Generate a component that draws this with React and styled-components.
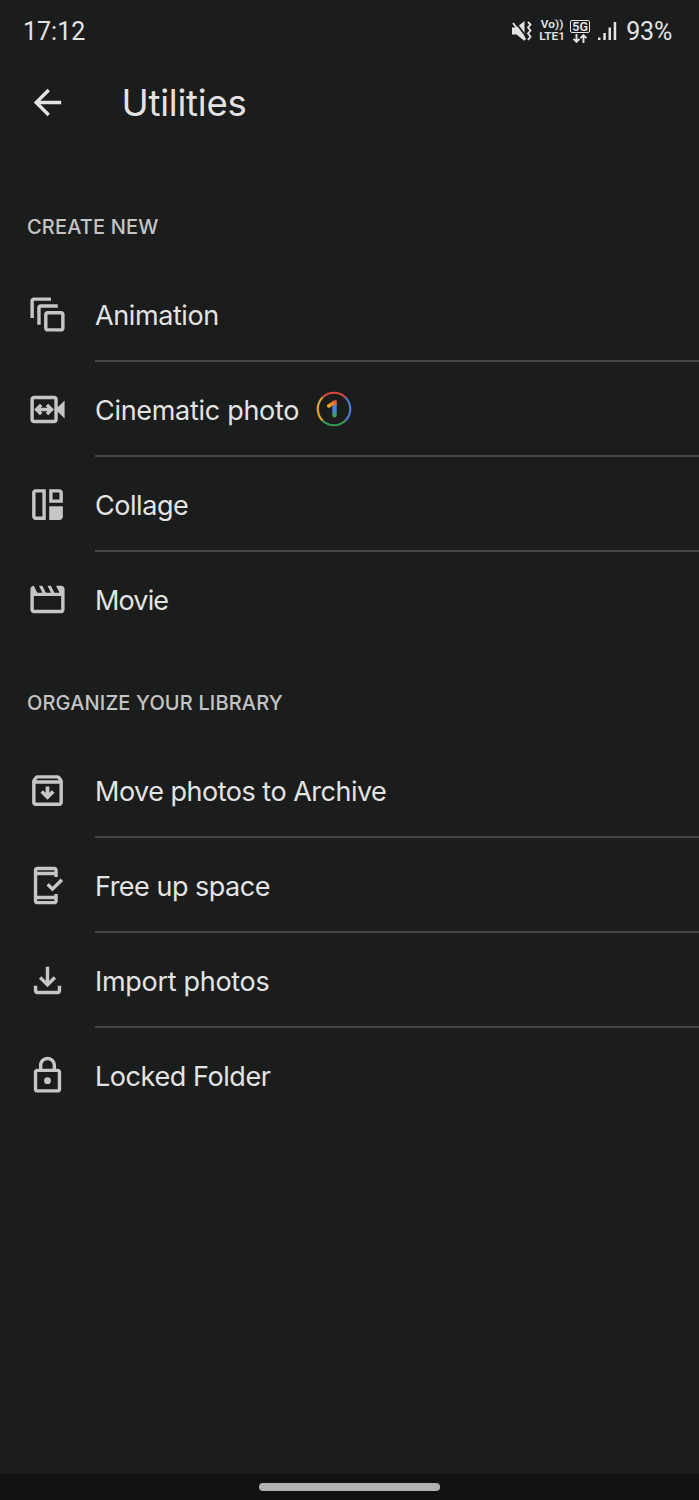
import React from "react";
import styled, { createGlobalStyle } from "styled-components";

const createItems = [
	{ label: "Animation", icon: AnimationIcon, tracking: -0.4 },
	{ label: "Cinematic photo", icon: CinematicIcon, badge: true, tracking: -0.3 },
	{ label: "Collage", icon: CollageIcon, tracking: -0.45 },
	{ label: "Movie", icon: MovieIcon, tracking: -0.85 },
];

const libraryItems = [
	{ label: "Move photos to Archive", icon: ArchiveIcon, tracking: -0.5 },
	{ label: "Free up space", icon: FreeUpIcon, tracking: -0.5 },
	{ label: "Import photos", icon: ImportIcon, tracking: -0.3 },
	{ label: "Locked Folder", icon: LockIcon, tracking: -0.42 },
];

function App() {
	return (
		<>
			<GlobalStyle />
			<Screen>
				<StatusBar>
					<Clock>17:12</Clock>
					<StatusIcons>
						<MuteIcon />
						<Volte>
							<span>Vo))</span>
							<span>LTE1</span>
						</Volte>
						<Network>
							<NetworkTag>5G</NetworkTag>
							<DataArrows />
						</Network>
						<SignalIcon />
						<Battery>93%</Battery>
					</StatusIcons>
				</StatusBar>
				<AppBar>
					<BackButton aria-label="Back">
						<Icon viewBox="0 0 24 24">
							<path d="M20 11H7.83l5.59-5.59L12 4l-8 8 8 8 1.41-1.41L7.83 13H20z" />
						</Icon>
					</BackButton>
					<Title>Utilities</Title>
				</AppBar>
				<main>
					<Section title="Create new" items={createItems} />
					<Section title="Organize your library" items={libraryItems} />
				</main>
				<NavBar>
					<NavHandle />
				</NavBar>
			</Screen>
		</>
	);
}

export default App;

function Section({ title, items }) {
	return (
		<section>
			<SectionTitle>{title}</SectionTitle>
			<List>
				{items.map(({ label, icon: ItemIcon, badge, tracking }) => (
					<Row key={label}>
						<IconSlot>
							<ItemIcon />
						</IconSlot>
						<RowBody>
							<Label $tracking={tracking}>{label}</Label>
							{badge && <OneBadge />}
						</RowBody>
					</Row>
				))}
			</List>
		</section>
	);
}

function AnimationIcon() {
	return (
		<Icon viewBox="0 0 24 24">
			<path d="M14 2H4c-1.1 0-2 .9-2 2v10h2V4h10zM18 6H8c-1.1 0-2 .9-2 2v10h2V8h10z" />
			<path d="M20 10h-8c-1.1 0-2 .9-2 2v8c0 1.1.9 2 2 2h8c1.1 0 2-.9 2-2v-8c0-1.1-.9-2-2-2zm0 10h-8v-8h8z" />
		</Icon>
	);
}

function CinematicIcon() {
	return (
		<Icon viewBox="0 0 24 24">
			<path d="M16 4H4c-1.1 0-2 .9-2 2v12c0 1.1.9 2 2 2h12c1.1 0 2-.9 2-2v-4.7l4 3.9V6.800l-4 3.900V6c0-1.1-.9-2-2-2zm0 14H4V6h12z" />
			<path
				d="M8.300 9.300 5.600 12l2.700 2.700M11.700 9.300l2.700 2.700-2.700 2.700M6 12h8"
				fill="none"
				stroke="currentColor"
				strokeWidth="2"
			/>
		</Icon>
	);
}

function CollageIcon() {
	return (
		<Icon viewBox="0 0 24 24">
			<path d="M11 21H5c-1.1 0-2-.9-2-2V5c0-1.1.9-2 2-2h6zM5 5v14h4V5z" fillRule="evenodd" />
			<path d="M13 11V3h6c1.1 0 2 .9 2 2v6zm2-6v4h4V5z" fillRule="evenodd" />
			<path d="M13 13h8v6c0 1.1-.9 2-2 2h-6z" />
		</Icon>
	);
}

function MovieIcon() {
	return (
		<Icon viewBox="0 0 24 24">
			<path
				d="M4 4l2 4h3L7 4h2l2 4h3l-2-4h2l2 4h3l-2-4h3c1.1 0 2 .9 2 2v12c0 1.1-.9 2-2 2H4c-1.1 0-2-.9-2-2V6c0-1.1.9-2 2-2zm0 6v8h16v-8z"
				fillRule="evenodd"
			/>
		</Icon>
	);
}

function ArchiveIcon() {
	return (
		<Icon viewBox="0 0 24 24">
			<path d="M20.54 5.23l-1.39-1.68C18.88 3.21 18.47 3 18 3H6c-.47 0-.88.21-1.16.55L3.46 5.23C3.17 5.57 3 6.02 3 6.5V19c0 1.1.9 2 2 2h14c1.1 0 2-.9 2-2V6.5c0-.48-.17-.93-.46-1.27zM6.24 5h11.52l.83 1H5.42zM5 19V8h14v11z" />
			<path d="M16.1 13.3l-1.5-1.500-1.500 1.500V9.600h-2.200v3.700l-1.500-1.500-1.500 1.500 4.100 4.100z" />
		</Icon>
	);
}

function FreeUpIcon() {
	return (
		<Icon viewBox="0 0 24 24">
			<path
				d="M6 1h10c1.1 0 2 .9 2 2v4h-2V6H6v12h10v-1h2v4c0 1.1-.9 2-2 2H6c-1.1 0-2-.9-2-2V3c0-1.1.9-2 2-2zm0 2v1h10V3zm0 17v1h10v-1z"
				fillRule="evenodd"
			/>
			<path
				d="M12.1 11.3l2.8 2.8 5.5-5.5"
				fill="none"
				stroke="currentColor"
				strokeWidth="2"
			/>
		</Icon>
	);
}

function ImportIcon() {
	return (
		<Icon viewBox="0 0 24 24">
			<path d="M12 16l-5-5 1.4-1.45 2.6 2.6V4h2v8.15l2.6-2.6L17 11z" />
			<path d="M6 20c-1.1 0-2-.9-2-2v-3h2v3h12v-3h2v3c0 1.1-.9 2-2 2z" />
		</Icon>
	);
}

function LockIcon() {
	return (
		<Icon viewBox="0 0 24 24">
			<path d="M18 8h-1V6c0-2.76-2.24-5-5-5S7 3.24 7 6v2H6c-1.1 0-2 .9-2 2v10c0 1.1.9 2 2 2h12c1.1 0 2-.9 2-2V10c0-1.1-.9-2-2-2zM9 6c0-1.66 1.34-3 3-3s3 1.34 3 3v2H9zm9 14H6V10h12z" />
			<circle cx="12" cy="15" r="2" />
		</Icon>
	);
}

function OneBadge() {
	return (
		<Badge viewBox="0 0 36 36">
			<defs>
				<linearGradient id="flag" x1="0" y1="1" x2="1" y2="0">
					<stop offset="0.2" stopColor="#f5b41c" />
					<stop offset="0.9" stopColor="#e0483e" />
				</linearGradient>
				<linearGradient id="stem" x1="0" y1="0" x2="0" y2="1">
					<stop offset="0.55" stopColor="#4a80e0" />
					<stop offset="0.9" stopColor="#35a455" />
				</linearGradient>
			</defs>
			<g fill="none" strokeWidth="2.2">
				<path d="M6.5 6.5A16.3 16.3 0 0 1 29.5 6.5" stroke="#d8483f" />
				<path d="M29.5 6.5A16.3 16.3 0 0 1 29.5 29.5" stroke="#4a7cd0" />
				<path d="M29.5 29.5A16.3 16.3 0 0 1 6.5 29.5" stroke="#359a52" />
				<path d="M6.5 29.5A16.3 16.3 0 0 1 6.5 6.5" stroke="#e0a526" />
			</g>
			<path d="M16.3 10h4.4v14.2q0 2.2-2.2 2.2t-2.2-2.2z" fill="url(#stem)" />
			<path d="M20.7 9v4.800l-4.400.8-2.600 1.900q-1.400.7-2.400-.5t.4-2.500l6.400-4.300q2-.8 2.600-.2z" fill="url(#flag)" />
		</Badge>
	);
}

function MuteIcon() {
	return (
		<Mute viewBox="0 0 20 20">
			<path d="M0 6.5h4.5L12.5 0v20l-8-6.5H0z" />
			<path d="M2.500 0l12 16" stroke="#1b1d1c" strokeWidth="1.700" />
			<path d="M1 2l12.500 16.500" stroke="currentColor" strokeWidth="1.900" />
			<path
				d="M16 1l2.500 2.500L16 6.500l2.500 3L16 12.500l2.500 3L16 19"
				fill="none"
				stroke="currentColor"
				strokeWidth="1.900"
			/>
		</Mute>
	);
}

function DataArrows() {
	return (
		<Arrows viewBox="0 0 16 9">
			<path d="M4.5 0v7.5M1.5 4.8l3 3 3-3M11.5 9V1.500M8.500 4.200l3-3 3 3" />
		</Arrows>
	);
}

function SignalIcon() {
	return (
		<Signal viewBox="0 0 19 20">
			<path d="M0 16.5h2.5V19H0zM5.3 12h2.500v7H5.300zM10.500 6.500H13V19h-2.500zM15.700 1h2.500v18h-2.500z" />
		</Signal>
	);
}

const GlobalStyle = createGlobalStyle`
	* {
		box-sizing: border-box;
	}

	body {
		margin: 0;
		background: #1b1d1c;
	}
`;

const Screen = styled.div`
	display: flex;
	flex-direction: column;
	height: 1500px;
	background: #1b1d1c;
	color: #e3e3e3;
	font-family: Inter, Roboto, sans-serif;

	main {
		flex: 1;
	}
`;

const StatusBar = styled.header`
	display: flex;
	align-items: center;
	justify-content: space-between;
	height: 62px;
	padding: 0 27px 0 23px;
	font-family: Roboto, sans-serif;
	font-size: 25px;
`;

const Clock = styled.span`
	letter-spacing: 0;
`;

const StatusIcons = styled.div`
	display: flex;
	align-items: center;
`;

const Mute = styled.svg`
	width: 20px;
	height: 20px;
	margin-right: 6px;
	fill: currentColor;
`;

const Volte = styled.div`
	display: flex;
	flex-direction: column;
	align-items: center;
	width: 28px;
	margin-right: 4px;
	font-size: 11.8px;
	font-weight: 600;
	letter-spacing: 0.1px;
	line-height: 11.6px;
`;

const Network = styled.div`
	display: flex;
	flex-direction: column;
	align-items: center;
	gap: 1px;
	margin-right: 8px;
`;

const NetworkTag = styled.span`
	width: 20px;
	height: 13px;
	border: 1px solid currentColor;
	border-radius: 2px;
	font-size: 12.5px;
	font-weight: 600;
	line-height: 12px;
	text-align: center;
`;

const Arrows = styled.svg`
	width: 16px;
	height: 9px;
	fill: none;
	stroke: currentColor;
	stroke-width: 1.9;
`;

const Signal = styled.svg`
	width: 19px;
	height: 20px;
	margin-right: 9px;
	fill: currentColor;
`;

const Battery = styled.span`
	letter-spacing: -0.2px;
`;

const AppBar = styled.div`
	display: flex;
	align-items: center;
	height: 81px;
	margin-bottom: 28.3px;
	padding-left: 27px;
`;

const BackButton = styled.button`
	display: flex;
	margin-right: 53.5px;
	padding: 0;
	border: 0;
	background: none;
	color: #e3e3e3;
`;

const Title = styled.h1`
	margin: 0;
	font-size: 36.5px;
	font-weight: 400;
	letter-spacing: -0.2px;
`;

const SectionTitle = styled.h2`
	height: 95.2px;
	margin: 0;
	padding-left: 27px;
	color: #c4c4c4;
	font-size: 20px;
	font-weight: 500;
	letter-spacing: 0.15px;
	line-height: 112px;
	text-transform: uppercase;
`;

const List = styled.ul`
	margin: 0;
	padding: 0;
	list-style: none;
`;

const RowBody = styled.div`
	display: flex;
	flex: 1;
	align-items: center;
	border-bottom: 2px solid #454746;
`;

const Row = styled.li`
	display: flex;
	height: 95.2px;

	&:last-child ${RowBody} {
		border-bottom-color: transparent;
	}
`;

const IconSlot = styled.div`
	display: flex;
	align-items: center;
	width: 95px;
	padding-left: 27px;
	color: #c7c5c5;
`;

const Icon = styled.svg`
	width: 41px;
	height: 41px;
	fill: currentColor;
`;

const Label = styled.span`
	padding-top: 4px;
	font-size: 27px;
	letter-spacing: ${({ $tracking }) => $tracking}px;
`;

const Badge = styled.svg`
	width: 36px;
	height: 36px;
	margin: 2px 0 0 16.5px;
`;

const NavBar = styled.footer`
	display: flex;
	justify-content: center;
	height: 26px;
	padding-top: 9px;
	background: #111111;
`;

const NavHandle = styled.div`
	width: 181px;
	height: 8px;
	border-radius: 4px;
	background: #b1b1b1;
`;
